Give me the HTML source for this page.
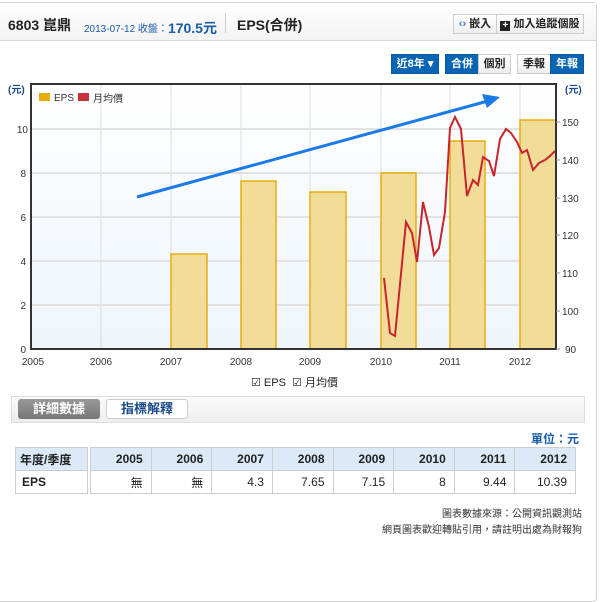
<!DOCTYPE html><html><head><meta charset="utf-8"><style>
*{margin:0;padding:0;box-sizing:border-box}
body{width:600px;height:552px;background:#fff;font-family:"Liberation Sans","Noto Sans CJK TC",sans-serif;position:relative;overflow:hidden;color:#222}
.a{position:absolute;white-space:nowrap}
.frame{position:absolute;left:-4px;top:2px;width:601px;height:600px;border:1px solid #d4d4d4;border-radius:4px}
.hdr{position:absolute;left:0;top:3px;width:596px;height:38px;background:linear-gradient(#fff,#f3f3f3);border-bottom:1px solid #d8d8d8}
.btn{position:absolute;height:20px;font-size:11px;font-weight:bold;line-height:18px;text-align:center;border:1px solid #ccc;background:linear-gradient(#fff,#eee);color:#222}
.blue{background:#0a64b4;border-color:#0a5aa0;color:#fff}
table{border-collapse:collapse;position:absolute;font-size:12px;table-layout:fixed}
td{border:1px solid #ccc;height:23px;padding:0 8px;text-align:right;white-space:nowrap}
</style></head><body>
<div class="frame"></div>
<div class="hdr"></div>
<div class="a" style="left:8px;top:15px;font-size:14px;font-weight:bold">6803 崑鼎</div>
<div class="a" style="left:84px;top:17px;font-size:10px;color:#1a5ca8">2013-07-12 收盤：<b style="font-size:14px;position:relative;top:1px">170.5元</b></div>
<div class="a" style="left:225px;top:13px;width:1px;height:20px;background:#ccc"></div>
<div class="a" style="left:237px;top:15px;font-size:14px;font-weight:bold">EPS(合併)</div>
<div class="btn" style="left:453px;top:14px;width:44px"><span style="color:#3a7ac8">‹›</span> 嵌入</div>
<div class="btn" style="left:496px;top:14px;width:88px"><span style="display:inline-block;width:10px;height:10px;background:#222;color:#fff;font-size:10px;line-height:10px;vertical-align:-1px">+</span> 加入追蹤個股</div>
<div class="btn blue" style="left:391px;top:54px;width:48px">近8年 ▾</div>
<div class="btn blue" style="left:445px;top:54px;width:34px">合併</div>
<div class="btn" style="left:478px;top:54px;width:33px">個別</div>
<div class="btn" style="left:517px;top:54px;width:34px">季報</div>
<div class="btn blue" style="left:550px;top:54px;width:34px">年報</div>
<svg class="a" style="left:0;top:0" width="600" height="400" font-family="Liberation Sans,Noto Sans CJK TC,sans-serif">
<defs><linearGradient id="g" x1="0" y1="0" x2="0" y2="1"><stop offset="0" stop-color="#fff"/><stop offset="1" stop-color="#eef5fb"/></linearGradient></defs>
<rect x="31" y="84" width="525" height="265" fill="url(#g)"/>
<g stroke="#ddd" stroke-width="1"><line x1="101" y1="84" x2="101" y2="349"/><line x1="171" y1="84" x2="171" y2="349"/><line x1="241" y1="84" x2="241" y2="349"/><line x1="310" y1="84" x2="310" y2="349"/><line x1="381" y1="84" x2="381" y2="349"/><line x1="450" y1="84" x2="450" y2="349"/><line x1="520" y1="84" x2="520" y2="349"/></g>
<g stroke="#e2e2e2" stroke-width="2"><line x1="31" y1="305" x2="556" y2="305"/><line x1="31" y1="261" x2="556" y2="261"/><line x1="31" y1="217" x2="556" y2="217"/><line x1="31" y1="173" x2="556" y2="173"/><line x1="31" y1="129" x2="556" y2="129"/></g>
<g fill="#f1dc98" stroke="#e8ac10" stroke-width="1.5">
<rect x="171" y="254" width="36" height="95"/><rect x="241" y="181" width="35" height="168"/><rect x="310" y="192" width="36" height="157"/><rect x="381" y="173" width="35" height="176"/><rect x="450" y="141" width="35" height="208"/><rect x="520" y="120" width="36" height="229"/></g>
<polyline fill="none" stroke="#c8242c" stroke-width="2" points="384,278 390,333 395,336 406,222 412,233 417,262 423,202 429,227 434,255 439,248 445,212 450,128 455,117 461,129 467,196 473,180 478,185 483,157 489,161 494,176 500,139 506,129 511,133 517,142 522,153 527,150 533,170 539,163 545,160 550,156 555,151"/>
<rect x="31" y="84" width="525" height="265" fill="none" stroke="#333" stroke-width="2"/>
<line x1="137" y1="197" x2="488" y2="101" stroke="#1a7ae8" stroke-width="3"/>
<polygon points="500,97 482,94 487,108" fill="#1a7ae8"/>
<rect x="39" y="93" width="11" height="8" fill="#e8ac10"/><text x="54" y="101" font-size="10" fill="#333">EPS</text>
<rect x="78" y="93" width="11" height="8" fill="#c8343c"/><text x="93" y="102" font-size="10" fill="#333">月均價</text>
<g font-size="10" fill="#333" text-anchor="end"><text x="26" y="353">0</text><text x="26" y="309">2</text><text x="26" y="265">4</text><text x="26" y="221">6</text><text x="26" y="177">8</text><text x="28" y="133">10</text></g>
<g font-size="10" fill="#333"><text x="565" y="353">90</text><text x="562" y="315">100</text><text x="562" y="277">110</text><text x="562" y="239">120</text><text x="562" y="202">130</text><text x="562" y="164">140</text><text x="562" y="126">150</text></g>
<g stroke="#999"><line x1="556" y1="349" x2="560" y2="349"/><line x1="556" y1="311" x2="560" y2="311"/><line x1="556" y1="273" x2="560" y2="273"/><line x1="556" y1="235" x2="560" y2="235"/><line x1="556" y1="198" x2="560" y2="198"/><line x1="556" y1="160" x2="560" y2="160"/><line x1="556" y1="122" x2="560" y2="122"/></g>
<g font-size="10" fill="#333" text-anchor="middle"><text x="33" y="365">2005</text><text x="101" y="365">2006</text><text x="171" y="365">2007</text><text x="241" y="365">2008</text><text x="310" y="365">2009</text><text x="381" y="365">2010</text><text x="450" y="365">2011</text><text x="520" y="365">2012</text></g>
<text x="8" y="93" font-size="10" font-weight="bold" fill="#1a4a8a">(元)</text><text x="565" y="93" font-size="10" font-weight="bold" fill="#1a4a8a">(元)</text>
</svg>
<div class="a" style="left:251px;top:374px;font-size:11px">☑ EPS &nbsp;☑ 月均價</div>
<div class="a" style="left:11px;top:396px;width:574px;height:27px;border:1px solid #ddd;background:linear-gradient(#fafafa,#eee)"></div>
<div class="a" style="left:18px;top:399px;width:82px;height:20px;background:linear-gradient(#999,#777);border-radius:3px;color:#fff;font-weight:bold;font-size:13px;text-align:center;line-height:20px">詳細數據</div>
<div class="a" style="left:106px;top:399px;width:82px;height:20px;background:#fff;border:1px solid #ccc;border-radius:3px;color:#1a4a8a;font-weight:bold;font-size:13px;text-align:center;line-height:18px">指標解釋</div>
<div class="a" style="left:531px;top:430px;font-size:12px;font-weight:bold;color:#1a5ca8">單位：元</div>
<table style="left:15px;top:447px;width:73px"><tr style="background:#dbeaf6"><td style="text-align:left;font-weight:bold;font-size:12px;padding:0 4px">年度/季度</td></tr><tr><td style="text-align:left;font-weight:bold;padding:0 6px">EPS</td></tr></table>
<table style="left:90px;top:447px;width:486px"><tr style="background:#dbeaf6;font-weight:bold"><td>2005</td><td>2006</td><td>2007</td><td>2008</td><td>2009</td><td>2010</td><td>2011</td><td>2012</td></tr><tr><td>無</td><td>無</td><td>4.3</td><td>7.65</td><td>7.15</td><td>8</td><td>9.44</td><td>10.39</td></tr></table>
<div class="a" style="right:18px;top:505px;font-size:10px;color:#333">圖表數據來源：公開資訊觀測站</div>
<div class="a" style="right:18px;top:521px;font-size:10px;color:#333">網頁圖表歡迎轉貼引用，請註明出處為財報狗</div>
</body></html>
